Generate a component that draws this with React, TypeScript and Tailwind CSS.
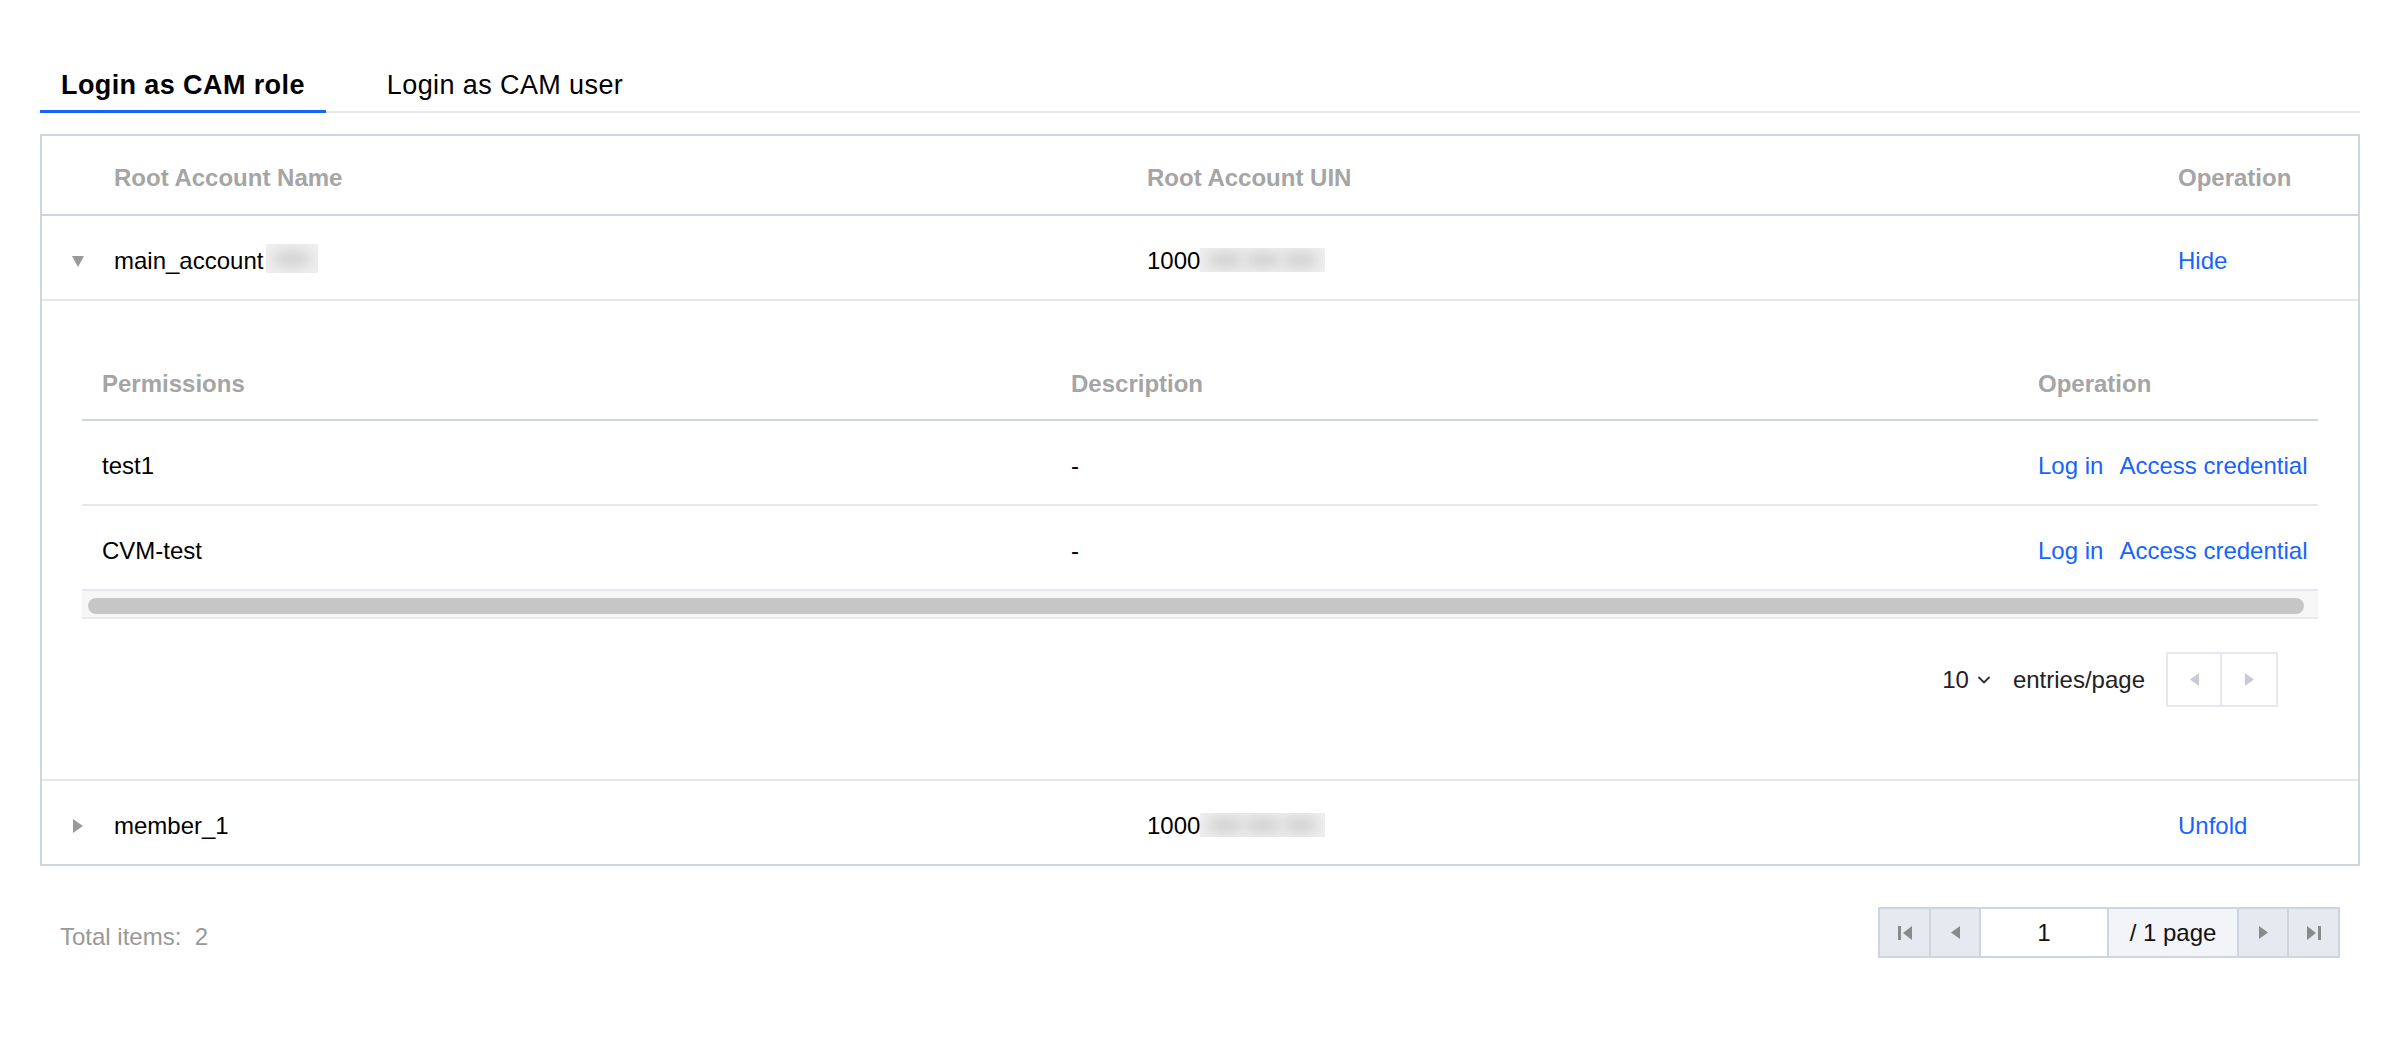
import { ChevronDown } from "lucide-react"

const font = { fontFamily: '"Liberation Sans", Arial, Helvetica, sans-serif' }

function Tri({ dir, color, w = 9, h = 13 }: { dir: "left" | "right" | "down"; color: string; w?: number; h?: number }) {
  const pts =
    dir === "left" ? `${w},0 ${w},${h} 0,${h / 2}` : dir === "right" ? `0,0 0,${h} ${w},${h / 2}` : `0,0 ${w},0 ${w / 2},${h}`
  return (
    <svg width={w} height={h} viewBox={`0 0 ${w} ${h}`}>
      <polygon points={pts} fill={color} />
    </svg>
  )
}

function FirstIcon({ last = false }: { last?: boolean }) {
  return (
    <svg width="14" height="14" viewBox="0 0 14 14">
      {last ? (
        <>
          <polygon points="0,0 0,14 9,7" fill="#8a8a8a" />
          <rect x="11" y="0" width="3" height="14" fill="#8a8a8a" />
        </>
      ) : (
        <>
          <rect x="0" y="0" width="3" height="14" fill="#8a8a8a" />
          <polygon points="14,0 14,14 5,7" fill="#8a8a8a" />
        </>
      )}
    </svg>
  )
}

// blurred, masked-out id
function Masked({ w, h, mt }: { w: number; h: number; mt: number }) {
  return (
    <span
      className="inline-block align-top overflow-hidden bg-[#efefef]"
      style={{ width: w, height: h, marginTop: mt }}
    >
      <span className="flex h-full items-center gap-[4px] px-[8px]">
        {Array.from({ length: w > 80 ? 3 : 1 }).map((_, i) => (
          <span key={i} className="block h-[14px] flex-1 rounded-full bg-[#cdcdcd] blur-[7px]" />
        ))}
      </span>
    </span>
  )
}

export default function App() {
  const rows = [{ name: "test1" }, { name: "CVM-test" }]

  return (
    <div className="min-h-screen bg-white pl-[40px] pr-[32px] pt-[69px] text-[24px] text-black" style={font}>
      {/* Tabs */}
      <div className="flex gap-[40px] border-b-2 border-[#e5e8ed]">
        <div className="-mb-[2px] border-b-[3px] border-[#1664ff] px-[21px] pb-[9px] text-[27px] font-bold leading-[32px] tracking-[0.4px]">
          Login as CAM role
        </div>
        <div className="-mb-[2px] border-b-[3px] border-transparent px-[21px] pb-[9px] text-[27px] leading-[32px] tracking-[0.4px]">
          Login as CAM user
        </div>
      </div>

      {/* Accounts table */}
      <div className="mt-[21px] border-2 border-[#cfd5de]">
        <div className="grid h-[80px] grid-cols-[72px_1033px_1031px_1fr] items-start border-b-2 border-[#cfd5de] pt-[28px] font-bold leading-[28px] text-[#a5a5a5]">
          <div />
          <div>Root Account Name</div>
          <div>Root Account UIN</div>
          <div>Operation</div>
        </div>

        <div className="grid h-[85px] grid-cols-[72px_1033px_1031px_1fr] items-start border-b-2 border-[#e5e8ed] pt-[31px] leading-[28px]">
          <div className="flex h-[28px] items-center justify-center">
            <Tri dir="down" color="#9a9a9a" w={12} h={11} />
          </div>
          <div>
            main_account
            <span className="ml-[3px]">
              <Masked w={52} h={29} mt={-3} />
            </span>
          </div>
          <div>
            1000
            <Masked w={125} h={24} mt={1} />
          </div>
          <div className="text-[#1664ff]">Hide</div>
        </div>

        {/* Expanded permissions */}
        <div className="h-[480px] border-b-2 border-[#e5e8ed] px-[40px] pt-[40px]">
          <div className="grid h-[80px] grid-cols-[969px_967px_1fr] items-start border-b-2 border-[#cfd5de] pl-[20px] pt-[29px] font-bold leading-[28px] text-[#a5a5a5]">
            <div>Permissions</div>
            <div>Description</div>
            <div>Operation</div>
          </div>
          {rows.map((r) => (
            <div
              key={r.name}
              className="grid h-[85px] grid-cols-[969px_967px_1fr] items-start border-b-2 border-[#e5e8ed] pl-[20px] pt-[31px] leading-[28px]"
            >
              <div>{r.name}</div>
              <div>-</div>
              <div className="flex gap-[16px] whitespace-nowrap text-[#1664ff]">
                <span>Log in</span>
                <span>Access credential</span>
              </div>
            </div>
          ))}
          <div className="h-[28px] border-b-2 border-[#eaeaea] bg-[#f7f7f7] pl-[6px] pr-[14px] pt-[7px]">
            <div className="h-[16px] rounded-full bg-[#c6c6c6]" />
          </div>

          <div className="mt-[33px] flex h-[55px] items-center justify-end pr-[40px] text-[#222]">
            <span>10</span>
            <ChevronDown size={20} strokeWidth={2.2} className="ml-[5px] text-[#333]" />
            <span className="ml-[19px]">entries/page</span>
            <div className="ml-[21px] flex h-[55px] border-2 border-[#e5e8ed]">
              <div className="flex w-[54px] items-center justify-center border-r-2 border-[#e5e8ed]">
                <Tri dir="left" color="#c8ccd2" />
              </div>
              <div className="flex w-[54px] items-center justify-center">
                <Tri dir="right" color="#c8ccd2" />
              </div>
            </div>
          </div>
        </div>

        <div className="grid h-[83px] grid-cols-[72px_1033px_1031px_1fr] items-start pt-[31px] leading-[28px]">
          <div className="flex h-[28px] items-center justify-center">
            <Tri dir="right" color="#9a9a9a" w={10} h={14} />
          </div>
          <div>member_1</div>
          <div>
            1000
            <Masked w={125} h={24} mt={1} />
          </div>
          <div className="text-[#1664ff]">Unfold</div>
        </div>
      </div>

      {/* Footer */}
      <div className="mt-[41px] flex items-start justify-between pl-[20px] pr-[20px]">
        <div className="pt-[16px] leading-[28px] text-[#999]">Total items:&nbsp; 2</div>
        <div className="flex h-[51px] border-2 border-[#cfd5de] text-[#111]">
          <div className="flex w-[49px] items-center justify-center bg-[#e6e9ef]">
            <FirstIcon />
          </div>
          <div className="flex w-[50px] items-center justify-center border-l-2 border-[#cfd5de] bg-[#e6e9ef]">
            <Tri dir="left" color="#8a8a8a" />
          </div>
          <div className="flex w-[128px] items-center justify-center border-l-2 border-[#cfd5de] bg-white">1</div>
          <div className="flex w-[130px] items-center justify-center border-l-2 border-[#cfd5de] bg-[#f2f4f8]">/ 1 page</div>
          <div className="flex w-[50px] items-center justify-center border-l-2 border-[#cfd5de] bg-[#e6e9ef]">
            <Tri dir="right" color="#8a8a8a" />
          </div>
          <div className="flex w-[51px] items-center justify-center border-l-2 border-[#cfd5de] bg-[#e6e9ef]">
            <FirstIcon last />
          </div>
        </div>
      </div>
    </div>
  )
}
